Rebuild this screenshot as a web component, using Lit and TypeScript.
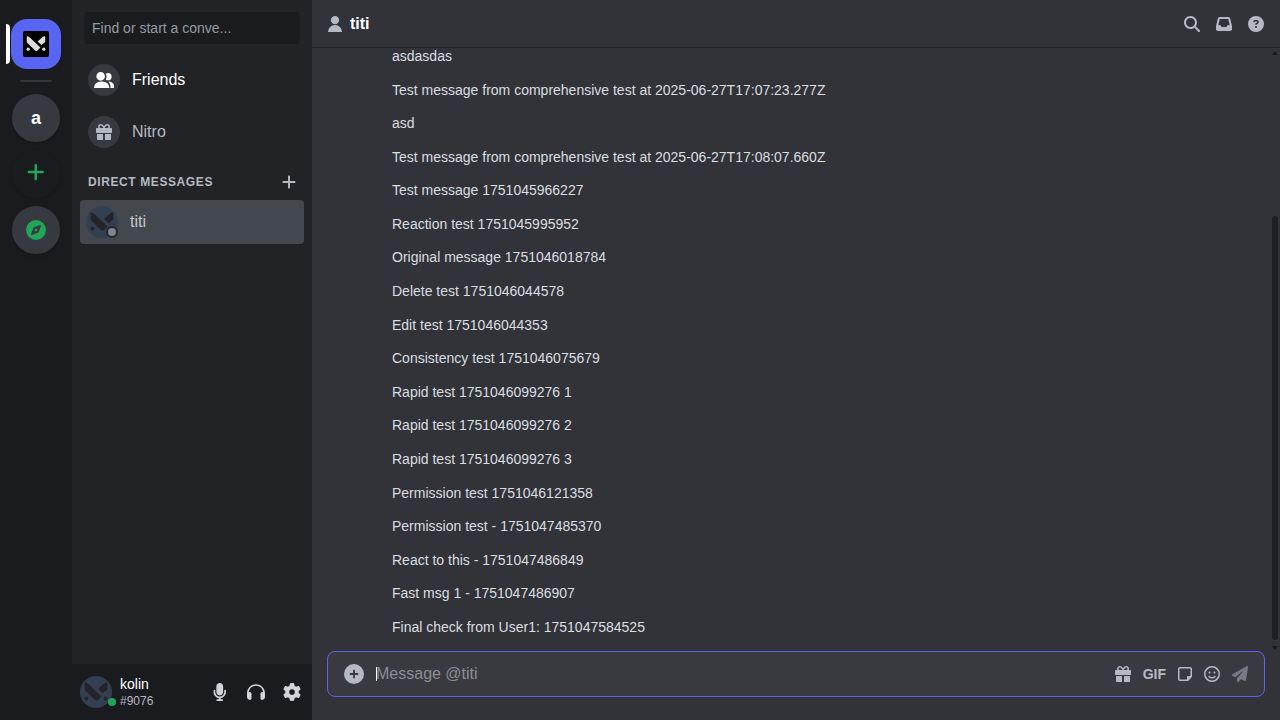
import { LitElement, html, css, svg } from "lit";
import { customElement, property } from "lit/decorators.js";

const CIRCLE = "M256 512A256 256 0 1 0 256 0a256 256 0 1 0 0 512z";

const ICONS: Record<string, [number, string]> = {
  user: [448, "M224 0a132 132 0 1 1 0 264a132 132 0 1 1 0-264zM0 512a224 224 0 0 1 448 0z"],
  friends: [660, "M213 0a138 138 0 1 1 0 276a138 138 0 1 1 0-276zM0 512C0 392 90 304 245 304S490 392 490 512zM376 50C396 36 420 30 446 30a118 118 0 1 1 0 236C420 266 396 258 376 244C410 190 410 104 376 50zM462 304C590 304 660 392 660 512H530C530 420 505 350 462 304z"],
  search: [512, "M416 208c0 45.9-14.9 88.3-40 122.7L502.6 457.4c12.5 12.5 12.5 32.8 0 45.3s-32.8 12.5-45.3 0L330.7 376c-34.4 25.2-76.8 40-122.7 40C93.1 416 0 322.9 0 208S93.1 0 208 0S416 93.1 416 208zM208 352a144 144 0 1 0 0-288 144 144 0 1 0 0 288z"],
  inbox: [512, "M121 32C91.6 32 66 52 58.9 80.5L1.9 308.4C.6 313.5 0 318.7 0 323.9V416c0 35.3 28.7 64 64 64H448c35.3 0 64-28.7 64-64V323.9c0-5.2-.6-10.4-1.9-15.5l-57-227.9C446 52 420.4 32 391 32H121zm0 64H391l48 192H387.8c-12.1 0-23.2 6.8-28.6 17.7l-14.3 28.6c-5.4 10.8-16.5 17.7-28.6 17.7H195.8c-12.1 0-23.2-6.8-28.6-17.7l-14.3-28.6c-5.4-10.8-16.5-17.7-28.6-17.7H73L121 96z"],
  help: [512, CIRCLE + "M169.8 165.3c7.9-22.3 29.1-37.3 52.8-37.3h58.3c34.9 0 63.1 28.3 63.1 63.1c0 22.6-12.1 43.5-31.7 54.8L280 264.4c-.2 13-10.9 23.6-24 23.6c-13.3 0-24-10.7-24-24V250.5c0-8.6 4.6-16.5 12.1-20.8l44.3-25.4c4.7-2.7 7.6-7.7 7.6-13.1c0-8.4-6.8-15.1-15.1-15.1H222.6c-3.4 0-6.4 2.1-7.5 5.3l-.4 1.2c-4.4 12.5-18.2 19-30.6 14.6s-19-18.2-14.6-30.6l.4-1.2zM224 352a32 32 0 1 1 64 0 32 32 0 1 1-64 0z"],
  gift: [512, "M32 480c0 17.7 14.3 32 32 32h160V320H32v160zm256 32h160c17.7 0 32-14.3 32-32V320H288v192zm192-384h-42.1c6.2-12.1 10.1-25.5 10.1-40 0-48.5-39.5-88-88-88-41.6 0-68.5 21.3-103 68.3-34.5-47-61.4-68.3-103-68.3-48.5 0-88 39.5-88 88 0 14.5 3.8 27.9 10.1 40H32c-17.7 0-32 14.3-32 32v112c0 8.8 7.2 16 16 16h480c8.8 0 16-7.2 16-16v-112c0-17.7-14.3-32-32-32zm-326.1 0c-22.1 0-40-17.9-40-40s17.9-40 40-40c19.9 0 34.6 3.3 86.1 80h-86.1zm206.1 0h-86.1c51.4-76.5 65.7-80 86.1-80 22.1 0 40 17.9 40 40s-17.9 40-40 40z"],
  plus: [448, "M256 80c0-17.7-14.3-32-32-32s-32 14.3-32 32V224H48c-17.7 0-32 14.3-32 32s14.3 32 32 32H192V432c0 17.7 14.3 32 32 32s32-14.3 32-32V288H400c17.7 0 32-14.3 32-32s-14.3-32-32-32H256V80z"],
  compass: [512, CIRCLE + "m50.7-186.9L162.4 380.6c-19.4 7.5-38.5-11.6-31-31l55.5-144.3c3.3-8.5 9.9-15.1 18.4-18.4l144.3-55.5c19.4-7.5 38.5 11.6 31 31L325.1 306.7c-3.2 8.5-9.9 15.1-18.4 18.4zM288 256a32 32 0 1 0-64 0 32 32 0 1 0 64 0z"],
  mic: [384, "M192 0C139 0 96 43 96 96V256c0 53 43 96 96 96s96-43 96-96V96c0-53-43-96-96-96zM64 216c0-13.3-10.7-24-24-24s-24 10.7-24 24v40c0 89.1 66.2 162.7 152 174.4V464H120c-13.3 0-24 10.7-24 24s10.7 24 24 24h72 72c13.3 0 24-10.7 24-24s-10.7-24-24-24H216V430.4c85.8-11.7 152-85.3 152-174.4V216c0-13.3-10.7-24-24-24s-24 10.7-24 24v40c0 70.7-57.3 128-128 128s-128-57.3-128-128V216z"],
  headphones: [512, "M256 80C149.9 80 62.4 159.4 49.6 262c9.4-3.8 19.6-6 30.4-6c26.5 0 48 21.5 48 48V432c0 26.5-21.5 48-48 48c-44.2 0-80-35.8-80-80V384 336 288C0 146.6 114.6 32 256 32s256 114.6 256 256v48 48 16c0 44.2-35.8 80-80 80c-26.5 0-48-21.5-48-48V304c0-26.5 21.5-48 48-48c10.8 0 21 2.1 30.4 6C449.6 159.4 362.1 80 256 80z"],
  gear: [512, "M495.9 166.6c3.2 8.7 .5 18.4-6.4 24.6l-43.3 39.4c1.1 8.3 1.7 16.8 1.7 25.4s-.6 17.1-1.7 25.4l43.3 39.4c6.9 6.2 9.6 15.9 6.4 24.6c-4.4 11.9-9.7 23.3-15.8 34.3l-4.7 8.1c-6.6 11-14 21.4-22.1 31.2c-5.9 7.2-15.7 9.6-24.5 6.8l-55.7-17.7c-13.4 10.3-28.2 18.9-44 25.4l-12.5 57.1c-2 9.1-9 16.3-18.2 17.8c-13.8 2.3-28 3.5-42.5 3.5s-28.7-1.2-42.5-3.5c-9.2-1.5-16.2-8.7-18.2-17.8l-12.5-57.1c-15.8-6.5-30.6-15.1-44-25.4L83.1 425.9c-8.8 2.8-18.6 .3-24.5-6.8c-8.1-9.8-15.5-20.2-22.1-31.2l-4.7-8.1c-6.1-11-11.4-22.4-15.8-34.3c-3.2-8.7-.5-18.4 6.4-24.6l43.3-39.4C64.6 273.1 64 264.6 64 256s.6-17.1 1.7-25.4L22.4 191.2c-6.9-6.2-9.6-15.9-6.4-24.6c4.4-11.9 9.7-23.3 15.8-34.3l4.7-8.1c6.6-11 14-21.4 22.1-31.2c5.9-7.2 15.7-9.6 24.5-6.8l55.7 17.7c13.4-10.3 28.2-18.9 44-25.4l12.5-57.1c2-9.1 9-16.3 18.2-17.8C227.3 1.2 241.5 0 256 0s28.7 1.2 42.5 3.5c9.2 1.5 16.2 8.7 18.2 17.8l12.5 57.1c15.8 6.5 30.6 15.1 44 25.4l55.7-17.7c8.8-2.8 18.6-.3 24.5 6.8c8.1 9.8 15.5 20.2 22.1 31.2l4.7 8.1c6.1 11 11.4 22.4 15.8 34.3zM256 336a80 80 0 1 0 0-160 80 80 0 1 0 0 160z"],
  attach: [512, CIRCLE + "M232 344V280H168c-13.3 0-24-10.7-24-24s10.7-24 24-24h64V168c0-13.3 10.7-24 24-24s24 10.7 24 24v64h64c13.3 0 24 10.7 24 24s-10.7 24-24 24H280v64c0 13.3-10.7 24-24 24s-24-10.7-24-24z"],
  sticker: [448, "M64 80c-8.8 0-16 7.2-16 16V416c0 8.8 7.2 16 16 16H288V352c0-17.7 14.3-32 32-32h80V96c0-8.8-7.2-16-16-16H64zM288 480H64c-35.3 0-64-28.7-64-64V96C0 60.7 28.7 32 64 32H384c35.3 0 64 28.7 64 64V320v5.5c0 17-6.7 33.3-18.7 45.3l-90.5 90.5c-12 12-28.3 18.7-45.3 18.7H288z"],
  smile: [512, "M464 256A208 208 0 1 0 48 256a208 208 0 1 0 416 0zM0 256a256 256 0 1 1 512 0A256 256 0 1 1 0 256zm177.6 62.1C192.8 334.5 218.8 352 256 352s63.2-17.5 78.4-33.9c9-9.7 24.2-10.4 33.9-1.4s10.4 24.2 1.4 33.9c-22 23.8-60 49.4-113.6 49.4s-91.7-25.5-113.6-49.4c-9-9.7-8.4-24.9 1.4-33.9s24.9-8.4 33.9 1.4zM144.4 208a32 32 0 1 1 64 0 32 32 0 1 1-64 0zm192-32a32 32 0 1 1 0 64 32 32 0 1 1 0-64z"],
  send: [512, "M498.1 5.6c10.1 7 15.4 19.1 13.5 31.2l-64 416c-1.5 9.7-7.4 18.2-16 23s-18.9 5.4-28 1.6L284 427.7l-68.5 74.1c-8.9 9.7-22.9 12.9-35.2 8.1S160 493.2 160 480V396.4c0-4 1.5-7.8 4.2-10.7L331.8 202.8c5.8-6.3 5.6-16-.4-22s-15.7-6.4-22-.7L106 360.8 17.7 316.6C7.1 311.3 .3 300.7 0 288.9s5.9-22.8 16.1-28.7l448-256c10.7-6.1 23.9-5.5 34 1.4z"],
};

@customElement("app-icon")
class AppIcon extends LitElement {
  @property() name = "user";
  static styles = css`
    :host { display: inline-flex; height: 16px; flex: none; }
    svg { display: block; height: 100%; width: auto; fill: currentColor; }
  `;
  render() {
    const [w, d] = ICONS[this.name];
    return html`<svg viewBox="0 0 ${w} 512" width=${w / 32} height="16" aria-hidden="true"><path fill-rule="evenodd" d=${d}></path></svg>`;
  }
}

const mark = svg`
  <path d="M4.6 7.4 Q4.6 6 6 6.6 L8.4 8 L21.4 20.4 L17.6 24.2 Q16.4 25.2 15.2 24.2 L5.4 14.8 Q4.6 14 4.6 13Z"/>
  <path d="M25.8 6.6 Q27.4 6 27.4 7.4 V12.6 Q27.4 13.6 26.6 14.2 L22.6 17.2 L18 12.8 L24 7.4Z"/>
  <circle cx="6.4" cy="22.4" r="2"/>
  <circle cx="25.6" cy="22.4" r="2"/>`;

@customElement("user-avatar")
class UserAvatar extends LitElement {
  @property() status = "offline";
  static styles = css`
    :host { display: block; position: relative; width: 32px; height: 32px; flex: none; }
    .face { display: block; width: 32px; height: 32px; border-radius: 50%; background: #353f52; }
    .mark { fill: #232428; }
    .dot { position: absolute; box-sizing: border-box; border-radius: 50%; }
    .offline { right: 0; bottom: 0; width: 12px; height: 12px; background: #80848e; border: 2px solid #232428; }
    .online { right: -4px; bottom: 2px; width: 8px; height: 8px; background: #23a559; }
  `;
  render() {
    return html`
      <svg class="face" viewBox="0 0 32 32" aria-hidden="true"><g class="mark">${mark}</g></svg>
      <span class="dot ${this.status}"></span>`;
  }
}

const MESSAGES = [
  "asdasdas",
  "Test message from comprehensive test at 2025-06-27T17:07:23.277Z",
  "asd",
  "Test message from comprehensive test at 2025-06-27T17:08:07.660Z",
  "Test message 1751045966227",
  "Reaction test 1751045995952",
  "Original message 1751046018784",
  "Delete test 1751046044578",
  "Edit test 1751046044353",
  "Consistency test 1751046075679",
  "Rapid test 1751046099276 1",
  "Rapid test 1751046099276 2",
  "Rapid test 1751046099276 3",
  "Permission test 1751046121358",
  "Permission test - 1751047485370",
  "React to this - 1751047486849",
  "Fast msg 1 - 1751047486907",
  "Final check from User1: 1751047584525",
];

@customElement("app-root")
class AppRoot extends LitElement {
  static styles = css`
    :host {
      display: grid;
      grid-template-columns: 72px 240px minmax(0, 1fr);
      height: 100vh;
      overflow: hidden;
      background: #313338;
      color: #dbdee1;
      font-family: "Liberation Sans", Arial, sans-serif;
      font-size: 16px;
    }
    * { box-sizing: border-box; }
    button, input { font: inherit; color: inherit; background: none; border: 0; padding: 0; margin: 0; }
    button { display: inline-flex; align-items: center; justify-content: center; cursor: pointer; }
    a { color: inherit; text-decoration: none; }
    ul { list-style: none; margin: 0; padding: 0; }

    .rail { position: relative; display: flex; flex-direction: column; align-items: center; padding-top: 19px; background: #1a1b1e; }
    .server { width: 48px; height: 48px; border-radius: 50%; background: #36393f; color: #fff; font-size: 18px; font-weight: 700; margin-bottom: 8px; box-shadow: 0 1px 4px rgba(0, 0, 0, 0.2); }
    .home { width: 50px; height: 50px; border-radius: 16px; background: #5865f2; margin-bottom: 11px; }
    .logo { width: 26px; height: 26px; border-radius: 2px; background: #000; fill: #dcdcdc; }
    .pill { position: absolute; left: 6px; top: 24px; width: 4px; height: 40px; border-radius: 0 4px 4px 0; background: #fff; }
    .divider { width: 32px; height: 2px; border-radius: 1px; background: #35363c; margin-bottom: 12px; }
    .add { background: none; color: #23a559; padding-bottom: 4px; }
    .add app-icon { height: 20px; }
    .explore { color: #23a559; }
    .explore app-icon { height: 20px; }

    .side { display: flex; flex-direction: column; min-height: 0; background: #222327; }
    .find { height: 32px; margin: 12px 12px 14px; padding: 0 8px; border-radius: 4px; background: #1a1b1e; font-size: 14px; justify-content: flex-start; color: #949ba4; }
    .nav { display: flex; flex-direction: column; gap: 8px; padding: 0 8px; }
    .link { display: flex; align-items: center; gap: 12px; height: 44px; padding: 0 8px; border-radius: 4px; color: #b5bac1; }
    .link.friends { color: #fff; }
    .round { display: grid; place-items: center; width: 32px; height: 32px; border-radius: 50%; background: #36393f; }
    .dmhead { display: flex; align-items: center; justify-content: space-between; padding: 18px 16px 8px; color: #b5bac1; }
    .dmhead h2 { margin: 0; font-size: 12px; line-height: 20px; font-weight: 700; letter-spacing: 0.05em; }
    .dm { display: flex; align-items: center; gap: 12px; height: 44px; margin: 0 8px; padding: 0 6px; border-radius: 4px; background: #43474e; color: #c4c9c2; }
    .me { display: flex; align-items: center; height: 56px; margin-top: auto; padding: 0 4px 0 8px; background: #1a1b1e; }
    .who { flex: 1; padding-left: 8px; font-size: 14px; line-height: 18px; color: #fff; }
    .tag { font-size: 12px; line-height: 16px; color: #b5bac1; }
    .tools { display: flex; gap: 4px; }
    .tools button { width: 32px; height: 32px; color: #d1d5db; }
    .tools app-icon { height: 18px; }

    .main { display: flex; flex-direction: column; min-width: 0; min-height: 0; padding-bottom: 23px; }
    .top { display: flex; align-items: center; justify-content: space-between; height: 48px; flex: none; padding: 0 16px; border-bottom: 1px solid #1f2023; color: #b5bac1; }
    .title { display: flex; align-items: center; gap: 8px; }
    .title h1 { margin: 0; font-size: 16px; line-height: 20px; color: #fff; }
    .actions { display: flex; gap: 16px; }
    .scroll { display: flex; flex: 1; min-height: 0; }
    .messages { display: flex; flex: 1; flex-direction: column; justify-content: space-between; overflow: hidden; padding: 0 16px 16px 80px; font-size: 14px; line-height: 16px; }
    .bar { display: flex; flex-direction: column; align-items: center; justify-content: space-between; width: 6px; margin-right: 2px; padding: 3px 0 1px; fill: #1a1b1e; }
    .track { display: flex; flex: 1; flex-direction: column; justify-content: flex-end; width: 100%; padding: 4px 0 6px; }
    .thumb { height: 73%; border-radius: 3px; background: #1e1f22; }
    .composer { display: flex; align-items: center; height: 46px; flex: none; margin: 0 15px; padding: 0 16px; border: 1px solid #5865f2; border-radius: 8px; background: #383a40; color: #b5bac1; }
    .attach app-icon { height: 20px; }
    .box { flex: 1; min-width: 0; margin-left: 12px; height: 24px; outline: 0; caret-color: transparent; }
    .box:focus:placeholder-shown { background: linear-gradient(#fff, #fff) 0 center / 1px 14px no-repeat; }
    .box::placeholder { color: #8b8e94; opacity: 1; }
    .box:not(:placeholder-shown) { caret-color: #fff; }
    .extras { display: flex; align-items: center; gap: 12px; }
    .gif { font-size: 14px; font-weight: 700; }
    .send { color: #777a82; }
  `;

  firstUpdated() {
    this.renderRoot.querySelector<HTMLInputElement>(".box")?.focus();
  }

  render() {
    return html`
      <nav class="rail" aria-label="Servers">
        <span class="pill"></span>
        <button class="home" aria-label="Direct messages">
          <svg class="logo" viewBox="0 0 32 32" aria-hidden="true">${mark}</svg>
        </button>
        <span class="divider"></span>
        <button class="server">a</button>
        <button class="server add" aria-label="Add a server"><app-icon name="plus"></app-icon></button>
        <button class="server explore" aria-label="Explore servers"><app-icon name="compass"></app-icon></button>
      </nav>

      <aside class="side">
        <button class="find">Find or start a conve...</button>
        <nav class="nav">
          <a class="link friends" href="#friends"><span class="round"><app-icon name="friends"></app-icon></span>Friends</a>
          <a class="link" href="#nitro"><span class="round"><app-icon name="gift"></app-icon></span>Nitro</a>
        </nav>
        <div class="dmhead">
          <h2>DIRECT MESSAGES</h2>
          <button aria-label="Create DM"><app-icon name="plus"></app-icon></button>
        </div>
        <a class="dm" href="#titi"><user-avatar></user-avatar>titi</a>
        <div class="me">
          <user-avatar status="online"></user-avatar>
          <div class="who">kolin<div class="tag">#9076</div></div>
          <div class="tools">
            <button aria-label="Mute"><app-icon name="mic"></app-icon></button>
            <button aria-label="Deafen"><app-icon name="headphones"></app-icon></button>
            <button aria-label="User settings"><app-icon name="gear"></app-icon></button>
          </div>
        </div>
      </aside>

      <main class="main">
        <header class="top">
          <div class="title"><app-icon name="user"></app-icon><h1>titi</h1></div>
          <div class="actions">
            <button aria-label="Search"><app-icon name="search"></app-icon></button>
            <button aria-label="Inbox"><app-icon name="inbox"></app-icon></button>
            <button aria-label="Help"><app-icon name="help"></app-icon></button>
          </div>
        </header>
        <div class="scroll">
          <ul class="messages">${MESSAGES.map((m) => html`<li>${m}</li>`)}</ul>
          <div class="bar" aria-hidden="true">
            <svg width="6" height="4" viewBox="0 0 6 4"><path d="M3 0L6 4H0z"></path></svg>
            <div class="track"><div class="thumb"></div></div>
            <svg width="6" height="4" viewBox="0 0 6 4"><path d="M3 4L6 0H0z"></path></svg>
          </div>
        </div>
        <form class="composer">
          <button class="attach" type="button" aria-label="Attach"><app-icon name="attach"></app-icon></button>
          <input class="box" type="text" placeholder="Message @titi" aria-label="Message @titi" />
          <div class="extras">
            <button type="button" aria-label="Gift"><app-icon name="gift"></app-icon></button>
            <button type="button" class="gif">GIF</button>
            <button type="button" aria-label="Sticker"><app-icon name="sticker"></app-icon></button>
            <button type="button" aria-label="Emoji"><app-icon name="smile"></app-icon></button>
            <button type="button" class="send" aria-label="Send"><app-icon name="send"></app-icon></button>
          </div>
        </form>
      </main>
    `;
  }
}
